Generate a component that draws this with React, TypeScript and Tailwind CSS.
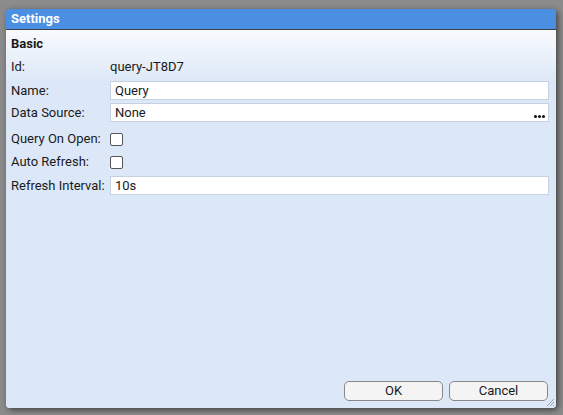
import React from 'react';

const Row: React.FC<{ label: string; children: React.ReactNode; className?: string }> = ({ label, children, className }) => (
  <div className={`flex items-center ${className ?? ''}`}>
    <span className="w-[99px] shrink-0">{label}</span>
    {children}
  </div>
);

// three small dots for the picker button
const MoreDots: React.FC = () => (
  <div className="flex gap-[1px] self-end mb-[3px]">
    <span className="w-[3px] h-[3px] rounded-full bg-[#111]" />
    <span className="w-[3px] h-[3px] rounded-full bg-[#111]" />
    <span className="w-[3px] h-[3px] rounded-full bg-[#111]" />
  </div>
);

const TextBox: React.FC<{ value: string; more?: boolean }> = ({ value, more }) => (
  <div className="flex-1 h-[19px] bg-white border border-[#c5d1e3] flex items-center pl-[4px] pr-[3px]">
    <span className="flex-1">{value}</span>
    {more && <MoreDots />}
  </div>
);

const CheckBox: React.FC = () => (
  <div className="w-[13px] h-[13px] bg-white border border-[#555] rounded-[2px]" />
);

export default function App() {
  return (
    <div className="w-[563px] h-[415px] bg-[#8c8c8c] p-[9px_8px_8px_6px] font-['Roboto',sans-serif] text-[13px] leading-[16px] text-[#1a1a1a]">
      <div className="w-[550px] h-[399px] flex flex-col rounded-[4px] overflow-hidden shadow-[2px_2px_6px_rgba(0,0,0,0.55)] relative">
        <div className="h-[21px] bg-[#4a8fe2] text-white font-bold flex items-center pl-[5px] border-b border-[#3a3f48]">
          Settings
        </div>
        <div className="flex-1 flex flex-col bg-gradient-to-b from-[#f8fafd] to-[#dce8f7] to-[14%] bg-[#dce8f7] px-[5px]">
          <div className="font-bold mt-[6px] h-[16px]">Basic</div>
          <div className="flex flex-col pr-[2px]">
            <Row label="Id:" className="mt-[7px] h-[16px]">
              <span>query-JT8D7</span>
            </Row>
            <Row label="Name:" className="mt-[6px]">
              <TextBox value="Query" />
            </Row>
            <Row label="Data Source:" className="mt-[3px]">
              <TextBox value="None" more />
            </Row>
            <Row label="Query On Open:" className="mt-[10px] h-[14px]">
              <CheckBox />
            </Row>
            <Row label="Auto Refresh:" className="mt-[9px] h-[14px]">
              <CheckBox />
            </Row>
            <Row label="Refresh Interval:" className="mt-[7px]">
              <TextBox value="10s" />
            </Row>
          </div>
          <div className="flex-1" />
          <div className="flex justify-end gap-[6px] pb-[7px] pr-[3px]">
            <button className="w-[99px] h-[20px] bg-[#f4f4f4] border border-[#888] rounded-[5px] text-[13px]">OK</button>
            <button className="w-[99px] h-[20px] bg-[#f4f4f4] border border-[#888] rounded-[5px] text-[13px]">Cancel</button>
          </div>
        </div>
        <svg className="absolute right-[1px] bottom-[1px]" width="10" height="10" viewBox="0 0 10 10">
          <path d="M9 2L2 9M9 5L5 9M9 8L8 9" stroke="#9aa3ad" strokeWidth="1" />
        </svg>
      </div>
    </div>
  );
}
